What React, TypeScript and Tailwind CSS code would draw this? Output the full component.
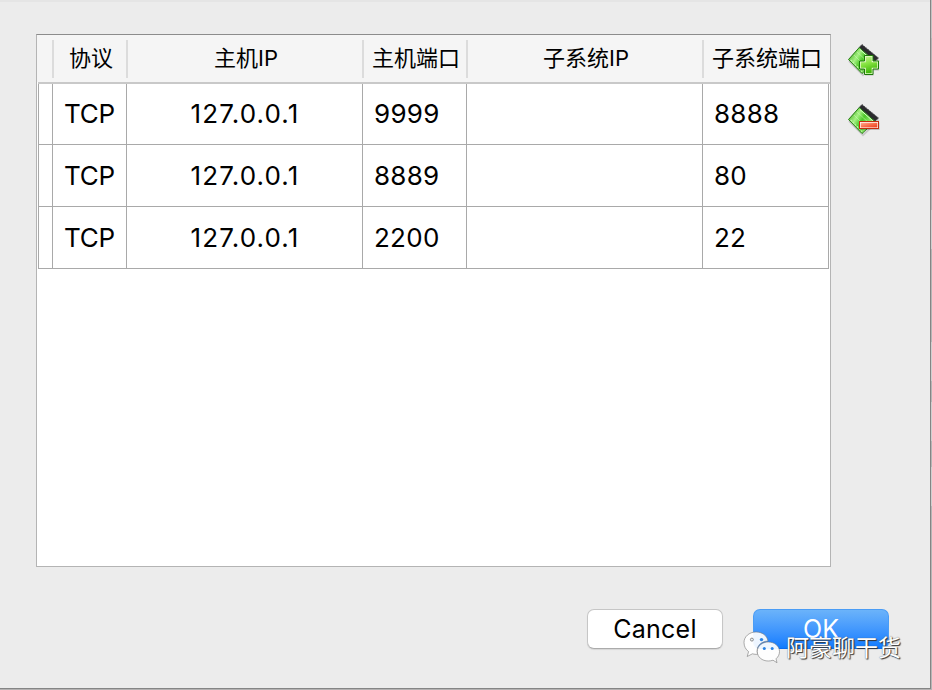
import React from "react";

const rows = [
  { protocol: "TCP", hostIp: "127.0.0.1", hostPort: "9999", guestIp: "", guestPort: "8888" },
  { protocol: "TCP", hostIp: "127.0.0.1", hostPort: "8889", guestIp: "", guestPort: "80" },
  { protocol: "TCP", hostIp: "127.0.0.1", hostPort: "2200", guestIp: "", guestPort: "22" },
];

const edge = [
  { h: "h-[38px]", c: "bg-[#c2c2c2]" },
  { h: "h-[172px]", c: "bg-[#b6b6b6]" },
  { h: "h-[39px]", c: "bg-[#cfcfcf]" },
  { h: "h-[93px]", c: "bg-[#b6b6b6]" },
  { h: "h-[39px]", c: "bg-[#cfcfcf]" },
  { h: "h-[21px]", c: "bg-[#b6b6b6]" },
  { h: "h-[39px]", c: "bg-[#cfcfcf]" },
  { h: "h-[26px]", c: "bg-[#b6b6b6]" },
  { h: "h-[39px]", c: "bg-[#cfcfcf]" },
  { h: "h-[184px]", c: "bg-[#b6b6b6]" },
];

function CardIcon({ kind }: { kind: "add" | "remove" }) {
  const id = "card-" + kind;
  return (
    <svg width="36" height="36" viewBox="0 0 36 36" className="block">
      <defs>
        <linearGradient id={id} x1="0" y1="0.2" x2="1" y2="0.8">
          <stop offset="0" stopColor="#3fae1c" />
          <stop offset="0.3" stopColor="#a5f183" />
          <stop offset="0.5" stopColor="#4cc928" />
          <stop offset="0.75" stopColor="#8de86a" />
          <stop offset="1" stopColor="#2f9a10" />
        </linearGradient>
        <linearGradient id={id + "-plus"} x1="0" y1="0" x2="0.3" y2="1">
          <stop offset="0" stopColor="#c9f89a" />
          <stop offset="0.5" stopColor="#84e23f" />
          <stop offset="1" stopColor="#43b80c" />
        </linearGradient>
        <linearGradient id={id + "-minus"} x1="0" y1="0" x2="1" y2="1">
          <stop offset="0" stopColor="#ffab90" />
          <stop offset="0.5" stopColor="#f96e4c" />
          <stop offset="1" stopColor="#ef3d1b" />
        </linearGradient>
      </defs>
      <path d="M3 19 L17 33 L33 18" fill="none" stroke="#000" strokeOpacity="0.15" strokeWidth="2" />
      <path d="M16 2.5 L32.5 16 L29 19.5 L13 5.5 Z" fill="#2b2b2e" stroke="#55555a" strokeDasharray="1.5 1" />
      <path d="M13.2 5.6 L29 19.5 L16 31.5 L2.5 17.5 Z" fill={"url(#" + id + ")"} stroke="#267c13" />
      <path d="M14 7.5 L27.5 19.5" stroke="#d8ffc9" strokeWidth="1" />
      <path d="M4.6 17.8 L16 29.6" stroke="#c0f5a9" strokeWidth="1.2" strokeDasharray="2 1" />
      <path d="M11 10 L23 21 M8 13 L19 24" stroke="#d6ffc4" strokeOpacity="0.45" />
      {kind === "add" ? (
        <>
          <path d="M18.5 13.5 h8.5 v5 h5.5 v9 h-5.5 v5 h-8.5 v-5 h-5 v-9 h5 Z" transform="translate(.6 .9)" fill="#000" fillOpacity="0.2" />
          <path d="M18.5 13.5 h8.5 v5.5 h5.5 v8 h-5.5 v5.5 h-8.5 v-5.5 h-5 v-8 h5 Z" fill="#e4fbc9" stroke="#1d7a08" />
          <path d="M19.8 14.8 h5.9 v5.5 h5.5 v5.4 h-5.5 v5.5 h-5.9 v-5.5 h-5 v-5.4 h5 Z" fill={"url(#" + id + "-plus)"} />
        </>
      ) : (
        <>
          <rect x="13.5" y="20.5" width="20" height="7.5" fill="#000" fillOpacity="0.2" />
          <rect x="13.5" y="19.5" width="19" height="7" fill="#fff0ea" stroke="#c52d0d" />
          <rect x="14.8" y="20.8" width="16.5" height="4.6" fill={"url(#" + id + "-minus)"} />
        </>
      )}
    </svg>
  );
}

function Head({ children, w }: { children?: React.ReactNode; w: string }) {
  return (
    <div className={"flex h-[38px] shrink-0 items-center justify-center border-l-2 border-[#dcdcdc] pb-[2px] pl-[2px] whitespace-nowrap " + w}>
      {children}
    </div>
  );
}

function Watermark() {
  return (
    <div className="absolute left-[743px] top-[630px] flex">
      <svg width="38" height="34" viewBox="0 0 38 34" className="mt-px block">
        <path d="M13 1 C6 1 1 5.8 1 11.5 C1 15.2 2.6 18.5 5.6 20.6 L4.2 25.5 L9.4 22.8 C11 23.3 13 23.5 14.6 23.3 C12.5 15.6 17.5 10.4 25 10 C24 4.5 19.2 1 13 1 Z" fill="#fff" fillOpacity="0.92" stroke="#777" strokeWidth="0.6" />
        <path d="M25.3 11 C19 11 14.3 15.2 14.3 20.5 C14.3 26 19 30 25.3 30 C27 30 28.5 29.7 30 29.2 L34 31.7 L33 27.8 C35.3 25.8 36.5 23.4 36.5 20.5 C36.5 15.2 31.6 11 25.3 11 Z" fill="#fff" fillOpacity="0.93" stroke="#777" strokeWidth="0.6" />
        <circle cx="8.9" cy="8.6" r="1.5" fill="#e9f0f5" stroke="#666" strokeWidth="0.7" />
        <circle cx="18.5" cy="8.6" r="1.7" fill="#2b83e4" />
        <circle cx="21.3" cy="17.4" r="1.5" fill="#2b83e4" />
        <circle cx="29.2" cy="17.4" r="1.5" fill="#2b83e4" />
      </svg>
      <span className="ml-[5px] mt-[2px] whitespace-nowrap text-[23px] leading-[32px] text-white [text-shadow:1px_1px_1px_#333,0_0_1px_#555]">阿豪聊干货</span>
    </div>
  );
}

export default function App() {
  return (
    <div className="relative flex h-[690px] w-[932px] flex-col overflow-hidden bg-[#b4b2b2] font-['Inter','Noto_Sans_CJK_SC',sans-serif] text-black">
      <div className="flex h-[688px]">
        <div className="flex w-[930px] flex-col border-t-2 border-[#e5e5e5] bg-[#ececec]">
          <div className="flex pl-9 pt-8">
            <div className="h-[533px] w-[795px] border border-[#b4b4b4] border-t-[#8c8c8c] bg-white">
              <div className="flex h-[47px] items-center bg-[#f5f5f5] pl-[15px] text-[22px] leading-none">
                <Head w="w-[74px]">协议</Head>
                <Head w="w-[236px]">主机IP</Head>
                <Head w="w-[104px]">主机端口</Head>
                <Head w="w-[236px]">子系统IP</Head>
                <Head w="w-[126px]">子系统端口</Head>
              </div>
              <div className="ml-px h-[2px] bg-[#c9c9c9]" />
              <div className="ml-px w-[791px] border-l border-[#a9a9a9] text-[26px] leading-none">
                {rows.map((r, i) => (
                  <div key={i} className={"flex border-b border-[#a9a9a9] " + (i === 0 ? "h-[61px]" : "h-[62px]")}>
                    <div className="w-[14px] border-r border-[#a9a9a9]" />
                    <div className="flex w-[74px] items-center justify-center border-r border-[#a9a9a9] tracking-[-0.01em]">{r.protocol}</div>
                    <div className="flex w-[236px] items-center justify-center border-r border-[#a9a9a9] pl-px tracking-[1.1px]">{r.hostIp}</div>
                    <div className="flex w-[104px] items-center border-r border-[#a9a9a9] pl-[11px] tracking-[0.01em]">{r.hostPort}</div>
                    <div className="flex w-[236px] items-center border-r border-[#a9a9a9]">{r.guestIp}</div>
                    <div className="flex w-[126px] items-center border-r border-[#a9a9a9] pl-[11px] tracking-[0.01em]">{r.guestPort}</div>
                  </div>
                ))}
              </div>
            </div>
            <div className="flex flex-col gap-6 pl-[15px] pt-[8px]">
              <CardIcon kind="add" />
              <CardIcon kind="remove" />
            </div>
          </div>
          <div className="flex gap-[30px] pl-[587px] pt-[42px] text-[25px] leading-none">
            <button className="h-10 w-[136px] rounded-[7px] border border-[#c6c6c6] border-b-[#ababab] bg-white tracking-[0.01em] shadow-[0_1px_1px_#00000018]">Cancel</button>
            <button className="h-10 w-[136px] rounded-[7px] border border-[#4a9cf5] border-b-[#0a6df0] bg-linear-to-b from-[#6bb3fa] to-[#0d7bff] text-white">OK</button>
          </div>
        </div>
        <div className="w-px bg-[#858585]" />
        <div className="flex w-px flex-col">
          {edge.map((e, i) => (
            <div key={i} className={"w-px shrink-0 " + e.h + " " + e.c} />
          ))}
        </div>
      </div>
      <div className="h-px w-[931px] bg-[#858585]" />
      <Watermark />
    </div>
  );
}
